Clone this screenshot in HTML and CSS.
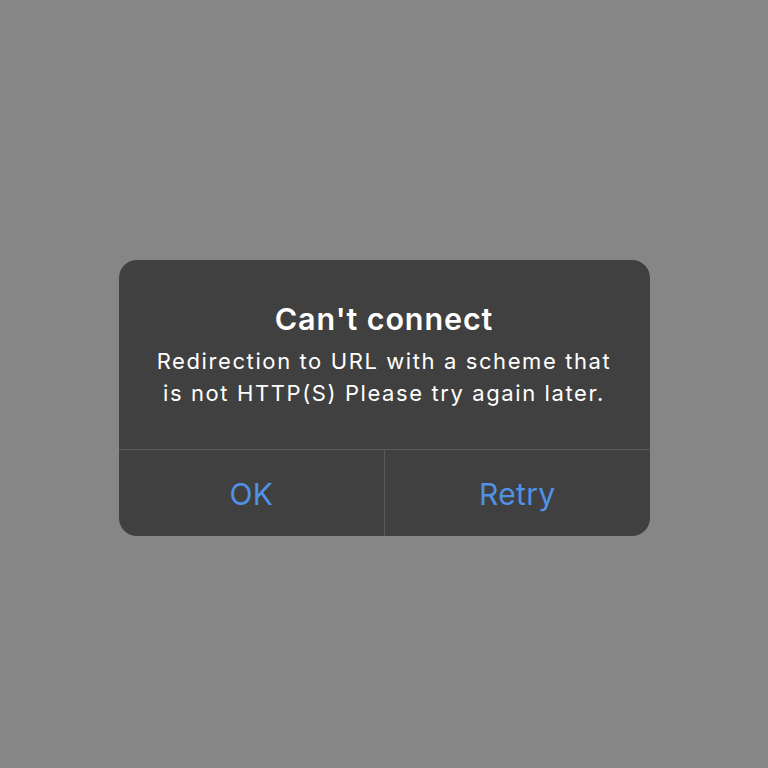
FILE: index.html
```html
<!DOCTYPE html>
<html lang="en">
<head>
<meta charset="utf-8">
<title>Can't connect</title>
<link rel="stylesheet" href="styles.css">
</head>
<body>
  <div class="screen">
    <div class="alert" role="alertdialog" aria-labelledby="alert-title">
      <div class="alert-body">
        <h1 class="alert-title" id="alert-title">Can't connect</h1>
        <p class="alert-message">Redirection to URL with a scheme that is not HTTP(S) Please try again later.</p>
      </div>
      <div class="alert-actions">
        <button class="alert-button">OK</button>
        <button class="alert-button">Retry</button>
      </div>
    </div>
  </div>
</body>
</html>
```

FILE: styles.css
```css
html, body {
  margin: 0;
  padding: 0;
  height: 100%;
}

body {
  background: #868686;
  font-family: Inter, "Noto Sans", sans-serif;
}

.screen {
  box-sizing: border-box;
  height: 100%;
  padding-top: 260px;
  display: flex;
  justify-content: center;
  align-items: flex-start;
}

.alert {
  width: 531px;
  background: #404040;
  border-radius: 18px;
  overflow: hidden;
  color: #ffffff;
}

.alert-body {
  height: 189px;
  box-sizing: border-box;
  padding: 40px 26px 0;
  text-align: center;
}

.alert-title {
  margin: 0;
  font-size: 30.5px;
  font-weight: 600;
  line-height: 38px;
  letter-spacing: 0.9px;
}

.alert-message {
  margin: 7px 0 0;
  font-size: 22px;
  font-weight: 400;
  line-height: 32.4px;
  letter-spacing: 1.6px;
}

.alert-actions {
  display: grid;
  grid-template-columns: 1fr 1fr;
  border-top: 1px solid #5a5a5a;
  height: 86px;
}

.alert-button {
  background: none;
  border: 0;
  margin: 0;
  padding: 2px 0 0;
  font-family: inherit;
  font-size: 30px;
  font-weight: 400;
  letter-spacing: 0.3px;
  color: #4f92e6;
}

.alert-button + .alert-button {
  border-left: 1px solid #5a5a5a;
}
```
